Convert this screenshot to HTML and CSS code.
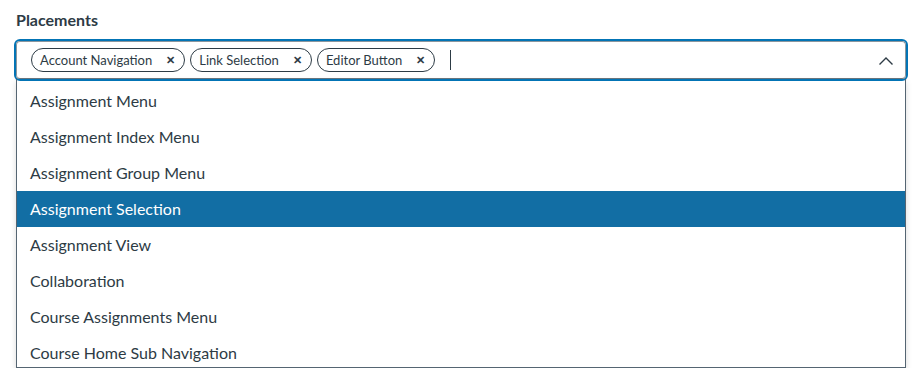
FILE: index.html
```html
<!DOCTYPE html>
<html lang="en">
<head>
    <meta charset="UTF-8">
    <meta name="viewport" content="width=device-width, initial-scale=1.0">
    <link rel="stylesheet" href="styles.css">
</head>
<body>

<div class="field">
    <label class="field-label">Placements</label>

    <div class="select-input">
        <span class="tag">Account Navigation<span class="tag-x">&#x2715;</span></span>
        <span class="tag">Link Selection<span class="tag-x">&#x2715;</span></span>
        <span class="tag">Editor Button<span class="tag-x">&#x2715;</span></span>
        <span class="caret"></span>
        <svg class="chevron" width="16" height="10" viewBox="0 0 16 10">
            <path d="M1.5 8.5 L8 2 L14.5 8.5" fill="none" stroke="#2d3b45" stroke-width="1.4"/>
        </svg>
    </div>

    <ul class="options">
        <li>Assignment Menu</li>
        <li>Assignment Index Menu</li>
        <li>Assignment Group Menu</li>
        <li class="active">Assignment Selection</li>
        <li>Assignment View</li>
        <li>Collaboration</li>
        <li>Course Assignments Menu</li>
        <li>Course Home Sub Navigation</li>
    </ul>
</div>

</body>
</html>
```

FILE: styles.css
```css
body {
    margin: 0;
    padding: 8px 0 0;
    font-family: 'Lato', 'Noto Sans', sans-serif;
    color: #2d3b45;
    background: #fff;
}
.field {
    padding: 0 16px 0 16px;
    width: 890px;
}
.field-label {
    display: block;
    font-size: 16px;
    font-weight: 700;
    line-height: 24px;
    margin-bottom: 9px;
}
.select-input {
    display: flex;
    align-items: center;
    height: 36px;
    padding: 0 11px 0 14px;
    border: 1px solid #8b969e;
    border-bottom-color: #6b7780;
    border-radius: 4px;
    box-shadow: 0 0 0 2px #0374b5;
}
.tag {
    display: inline-flex;
    align-items: center;
    height: 22px;
    padding: 0 9px 0 8px;
    margin-right: 5px;
    border: 1px solid #2d3b45;
    border-radius: 12px;
    font-size: 13px;
    color: #2d3b45;
}
.tag-x {
    margin-left: 14px;
    font-size: 11px;
    font-weight: 700;
}
.caret {
    display: inline-block;
    width: 1px;
    height: 20px;
    background: #2d3b45;
    margin-left: 10px;
}
.chevron {
    margin-left: auto;
    margin-top: 1px;
}
.options {
    list-style: none;
    margin: 0;
    padding: 4px 0 0;
    height: 284px;
    overflow: hidden;
    border: 1px solid #556572;
    border-top: none;
    box-shadow: 0 3px 6px rgba(0, 0, 0, 0.15);
}
.options li {
    height: 36px;
    line-height: 36px;
    padding-left: 13px;
    font-size: 16px;
}
.options li.active {
    background: #126ea4;
    color: #fff;
}
```
